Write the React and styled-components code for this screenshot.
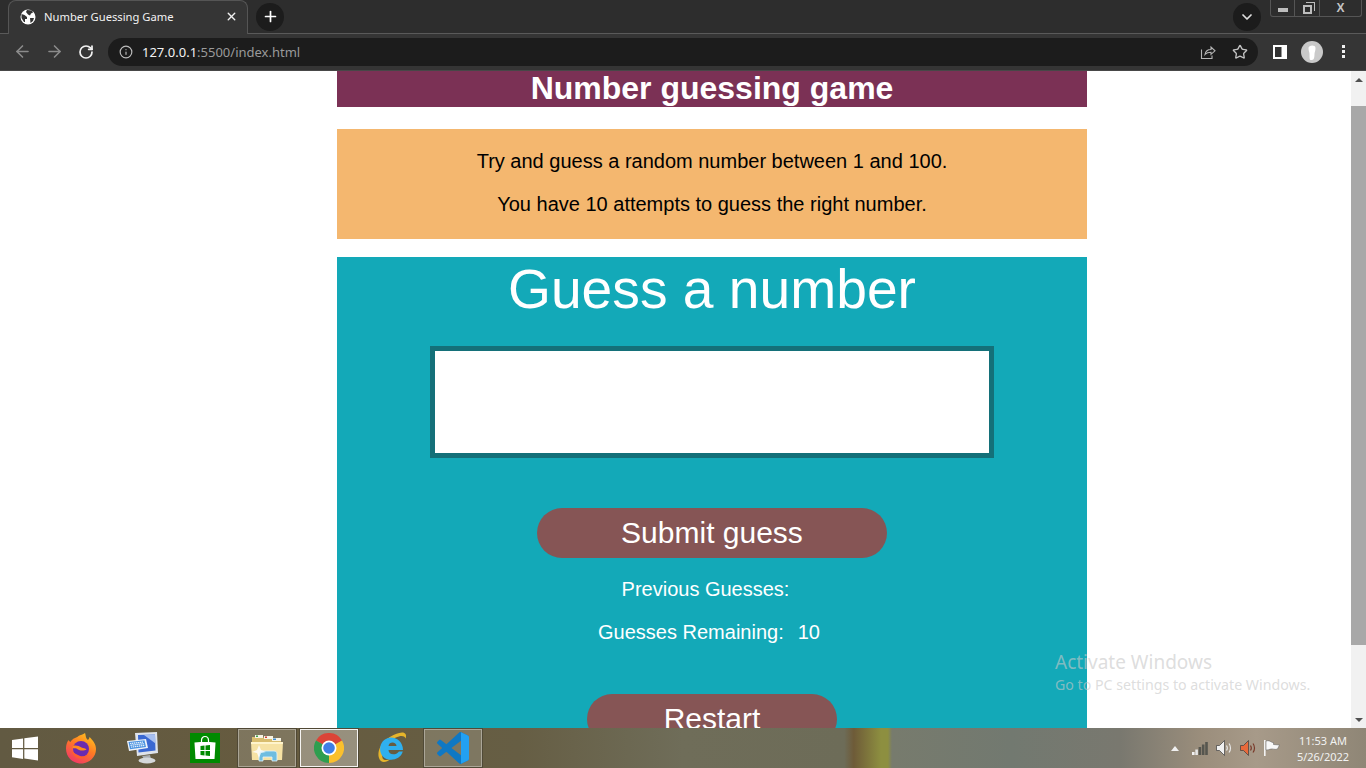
import React from "react";
import styled, { createGlobalStyle } from "styled-components";
import { ArrowLeft, ArrowRight, RotateCw, Info, Star, Plus, X, ChevronDown } from "lucide-react";

const GlobalStyle = createGlobalStyle`
  html, body {
    margin: 0;
    padding: 0;
    overflow: hidden;
  }
  * {
    box-sizing: border-box;
  }
`;

function GlobeIcon() {
  return (
    <svg width="16" height="16" viewBox="0 0 16 16">
      <circle cx="8" cy="8" r="7.500" fill="#fff" />
      <path d="M1.500 5l3 1 2.500 2 0 2 -2 0 0 3 -1 0 -2.500 -4z M7 1l5 .5 1 2 -2 1 -1 2 -2 -1 -2 -2.500z M10 9l4 0 -1 3 -2.500 2z" fill="#333" />
    </svg>
  );
}

function ShareIcon() {
  return (
    <svg width="16" height="16" viewBox="0 0 16 16" fill="none" stroke="#b5b5b5" strokeWidth="1.100">
      <path d="M1.500 5.500v9h10.500v-3" />
      <path d="M5 10.500c.5-3 2.500-5 6-5V3l4 3.800-4 3.500V8.200c-2.500 0-4.500.6-6 2.300z" />
    </svg>
  );
}

function SidePanelIcon() {
  return (
    <svg width="14" height="14" viewBox="0 0 14 14">
      <rect width="14" height="14" fill="#fff" />
      <rect x="2" y="2" width="6.500" height="10" fill="#333" />
    </svg>
  );
}

function Avatar() {
  return (
    <svg width="22" height="22" viewBox="0 0 22 22">
      <circle cx="11" cy="11" r="11" fill="#c9c9c9" />
      <path d="M7.500 7c0-3 7-3.500 7 0 0 3-1 4-1 6 0 3-.5 6-2.500 6h-1.500c-1 0-1-3-1-6 0-2-1-3-1-6z" fill="#fff" />
    </svg>
  );
}

function WindowsLogo() {
  return (
    <svg width="26" height="25" viewBox="0 0 27 25" fill="#fff">
      <path d="M0 3.600L11.500 2v10H0z" />
      <path d="M12.800 1.800L27 0v12H12.800z" />
      <path d="M0 13.300h11.500v10L0 21.700z" />
      <path d="M12.800 13.300H27V25l-14.200-2z" />
    </svg>
  );
}

function FirefoxIcon() {
  return (
    <svg width="32" height="32" viewBox="0 0 32 32">
      <defs>
        <linearGradient id="ffOuter" x1="0.800" y1="0" x2="0.200" y2="1">
          <stop offset="0" stopColor="#ffc61f" />
          <stop offset="0.450" stopColor="#ff7a24" />
          <stop offset="1" stopColor="#f0326c" />
        </linearGradient>
      </defs>
      <path d="M20 1c1 3 .5 5 3 7 1-1 1.500-2 1.500-3 3.500 3.500 6.500 7 6.500 12 0 8-6.500 14.500-15 14.500S1 25 1 16.500c0-3.500 1-6.500 2.500-8.500.5 1 1 1.500 2 2 2-4 6-4 8-6 2-1 4.500-1.500 6.500-3z" fill="url(#ffOuter)" />
      <circle cx="16" cy="17" r="8" fill="#6a2bb0" />
      <path d="M8 14c3-1 6 0 8.500 1.500 2 1 4 .5 5 2-3 2-8 1-10-1-1.500-.5-3 0-4-.5z" fill="#ff8a1e" />
      <path d="M7 19c1 5 5 8 10 7.500 3-.5 5-2 6-4-3 2-7 2.500-10 .5-2-1-4-2-6-4z" fill="#ff5e2e" />
    </svg>
  );
}

function ComputerIcon() {
  return (
    <svg width="32" height="32" viewBox="0 0 32 32">
      <path d="M8 1l22 -1 1 21 -21 3z" fill="#dfe3ea" />
      <path d="M11 3l17 -.5 .5 16 -17 2z" fill="#3a68d2" />
      <path d="M17 3l11 -.5 .5 9z" fill="#a7bff0" />
      <path d="M0 9l19 -2 2 9 -19 3z" fill="#eef3fa" />
      <path d="M1.500 10l16 -1.700 1.500 6.700 -16 2.200z" fill="#4a92e0" />
      <path d="M3 11.500l13 -1.400M3.500 13.300l13.500 -1.700M4 15.200l13.500 -1.800" stroke="#e4effb" strokeWidth="1.200" strokeDasharray="1.400 .6" />
      <path d="M15 24l8 -1 1 4h-7z" fill="#a9adb2" />
      <ellipse cx="20" cy="28.500" rx="8.500" ry="3" fill="#d5d8da" />
    </svg>
  );
}

function StoreIcon() {
  return (
    <svg width="30" height="30" viewBox="0 0 30 30">
      <rect width="30" height="30" fill="#008a00" />
      <path d="M11.500 10V7.500C11.500 5 13 3.500 15 3.500S18.500 5 18.500 7.500V10" fill="none" stroke="#fff" strokeWidth="1.200" />
      <path d="M4.500 9.500l6-.500h9l6 .500-1 16.500h-19z" fill="#fff" />
      <path d="M10.500 13l4-.500v4.500h-4zM15.500 12.400l4.500-.500V17h-4.500zM10.500 18h4v4.500l-4-.500zM15.500 18H20v5l-4.500-.500z" fill="#008a00" />
    </svg>
  );
}

function ExplorerIcon() {
  return (
    <svg width="32" height="32" viewBox="0 0 32 32">
      <path d="M1 5h11l2 2h16v7H1z" fill="#d9bd6e" />
      <rect x="4" y="3" width="8" height="3" fill="#f7f4e6" />
      <rect x="5" y="3.500" width="2" height="1.500" fill="#3fa04a" />
      <rect x="13" y="4" width="9" height="3" fill="#f7f4e6" />
      <rect x="14" y="4.500" width="2" height="1.500" fill="#d0423a" />
      <rect x="21" y="6" width="9" height="3" fill="#f7f4e6" />
      <rect x="22" y="6.500" width="3" height="1.500" fill="#3d8fd8" />
      <path d="M0 10h32l-1 18H1z" fill="#f6e2a4" />
      <path d="M0 10h32v2H0z" fill="#fff4cc" />
      <path d="M8 22c0-2 1-3 3-3h12c2 0 3 1 3 3v7h-5v-4H12v4H8z" fill="#6fbde0" stroke="#e5f4fb" strokeWidth="0.800" />
      <path d="M8 13l2 5 5 2-5 1-2 5-2-5-5-1 5-2z" fill="#fff" opacity="0.800" />
    </svg>
  );
}

function ChromeIcon() {
  return (
    <svg width="30" height="30" viewBox="0 0 30 30">
      <path d="M15 15L2 7.500A15 15 0 0 1 28 7.500z" fill="#db4437" />
      <path d="M15 15L28 7.500A15 15 0 0 1 15 30z" fill="#fbc02d" />
      <path d="M15 15L15 30A15 15 0 0 1 2 7.500z" fill="#2e9e4f" />
      <circle cx="15" cy="15" r="7.500" fill="#fff" />
      <circle cx="15" cy="15" r="5.800" fill="#3f7fe6" />
    </svg>
  );
}

function IEIcon() {
  return (
    <svg width="32" height="32" viewBox="0 0 32 32">
      <path d="M4 26C1 15 12 3 27 .5c3.500 0 5 2.500 3.500 6-1-2.500-3.500-3-6.500-2C14 7 6 17 7.500 26c1 2.500 4 2.500 8 1-4.500 4-10 4-11.500-1z" fill="#e7b52a" />
      <path d="M16 5.500c6.500 0 12 5 12 12.500H13.500c0 5 7 6 10.500 1.500h3.800c-2 6.500-8.500 9-14 8-6.500-1-9.500-7-8.500-12.500 1-6 6-9.500 10.700-9.500zm-2.500 8.500h8c0-4.500-7.500-5-8 0z" fill="#2fb0ee" fillRule="evenodd" />
    </svg>
  );
}

function VSCodeIcon() {
  return (
    <svg width="32" height="32" viewBox="0 0 100 100">
      <path
        d="M70.900 99.300c1.600.6 3.400.6 5-.2l20.600-9.900c2.200-1 3.500-3.200 3.500-5.600V16.400c0-2.400-1.400-4.600-3.500-5.600L75.900.9c-2.100-1-4.500-.8-6.300.6-.3.2-.5.4-.8.7L29.400 38.100 12.200 25c-1.600-1.200-3.800-1.100-5.300.2l-5.500 5c-1.800 1.700-1.800 4.500 0 6.200L16.300 50 1.400 63.600c-1.800 1.700-1.800 4.500 0 6.200l5.500 5c1.500 1.300 3.700 1.400 5.300.2l17.200-13.100 39.400 35.900c.6.600 1.300 1.100 2.100 1.500zM75 27.300L45.100 50 75 72.700V27.300z"
        fill="#0f78c4"
        fillRule="evenodd"
      />
      <path d="M75 1l21.500 9.800c2.200 1 3.500 3.200 3.500 5.600v67.200c0 2.400-1.300 4.600-3.500 5.600L75 99z" fill="#22a0f2" />
    </svg>
  );
}

function SignalIcon() {
  return (
    <svg width="16" height="13" viewBox="0 0 16 13">
      <rect x="0" y="10" width="2.600" height="3" fill="#f2f2f2" />
      <rect x="3.300" y="7.500" width="2.600" height="5.500" fill="#e6e6e6" />
      <rect x="6.600" y="5" width="2.600" height="8" fill="#56564f" />
      <rect x="9.900" y="2.500" width="2.600" height="10.500" fill="#56564f" />
      <rect x="13.200" y="0" width="2.600" height="13" fill="#56564f" />
    </svg>
  );
}

function SpeakerIcon({ body, wave }) {
  return (
    <svg width="16" height="16" viewBox="0 0 16 16">
      <path d="M.5 5.500h3l5-5v15l-5-5h-3z" fill={body} stroke="#3c3c3c" strokeWidth="0.700" />
      <path d="M10.500 5.500c1 1.500 1 3.500 0 5M13 3.500c2 2.500 2 6.500 0 9" fill="none" stroke={wave} strokeWidth="1.200" />
    </svg>
  );
}

function FlagIcon() {
  return (
    <svg width="16" height="16" viewBox="0 0 16 16">
      <rect x="0" y="0" width="1.600" height="16" fill="#f2f2f2" />
      <path d="M2 1c3-1 4 .5 6.500 1.500h1v2L15.500 5l-2 4c-3 1-4.500-.5-6.500 0-2 .5-3 1-5 1z" fill="#f8f8f8" stroke="#5a5a5a" strokeWidth="0.500" />
    </svg>
  );
}

export default function App() {
  return (
    <Screen>
      <GlobalStyle />
      <Browser>
        <TabStrip>
          <Tab>
            <GlobeIcon />
            <TabTitle>Number Guessing Game</TabTitle>
            <X size={13} strokeWidth={2.600} color="#f0f0f0" />
          </Tab>
          <RoundButton $left={8}>
            <Plus size={17} strokeWidth={2.400} color="#fff" />
          </RoundButton>
          <Spacer />
          <RoundButton>
            <ChevronDown size={16} strokeWidth={2.600} color="#e0e0e0" />
          </RoundButton>
          <WindowControls>
            <WindowButton $width={24}><MinimizeGlyph /></WindowButton>
            <WindowButton $width={25}><RestoreGlyph /></WindowButton>
            <WindowButton $width={41}><CloseGlyph>X</CloseGlyph></WindowButton>
          </WindowControls>
        </TabStrip>
        <Toolbar>
          <NavButton><ArrowLeft size={19} strokeWidth={2} color="#8b8b8b" /></NavButton>
          <NavButton><ArrowRight size={19} strokeWidth={2} color="#8b8b8b" /></NavButton>
          <NavButton><RotateCw size={16} strokeWidth={2.600} color="#f2f2f2" /></NavButton>
          <AddressBar>
            <Info size={14} strokeWidth={2} color="#bdbdbd" />
            <Url>
              <UrlHost>127.0.0.1</UrlHost>:5500/index.html
            </Url>
            <Spacer />
            <AddressAction><ShareIcon /></AddressAction>
            <AddressAction><Star size={16} strokeWidth={2} color="#c4c4c4" /></AddressAction>
          </AddressBar>
          <ToolbarEnd>
            <SidePanelIcon />
            <Avatar />
            <MenuDots><i /><i /><i /></MenuDots>
          </ToolbarEnd>
        </Toolbar>
      </Browser>

      <Viewport>
        <Page>
          <Banner>Number guessing game</Banner>
          <Intro>
            <IntroLine>Try and guess a random number between 1 and 100.</IntroLine>
            <IntroLine>You have 10 attempts to guess the right number.</IntroLine>
          </Intro>
          <GameCard>
            <GameTitle>Guess a number</GameTitle>
            <GuessInput type="text" />
            <PillButton $width={350}>Submit guess</PillButton>
            <Stat $shift={13}>Previous Guesses:</Stat>
            <Stat $shift={6}>
              Guesses Remaining:<StatValue>10</StatValue>
            </Stat>
            <PillButton $width={250} $top={50}>Restart</PillButton>
          </GameCard>
        </Page>
        <Scrollbar>
          <ScrollArrow $up />
          <ScrollTrack>
            <ScrollThumb />
          </ScrollTrack>
          <ScrollArrow />
        </Scrollbar>
        <Watermark>
          <WatermarkTitle>Activate Windows</WatermarkTitle>
          <WatermarkNote>Go to PC settings to activate Windows.</WatermarkNote>
        </Watermark>
      </Viewport>

      <Taskbar>
        <StartButton><WindowsLogo /></StartButton>
        <TaskList>
          <TaskButton><FirefoxIcon /></TaskButton>
          <TaskButton><ComputerIcon /></TaskButton>
          <TaskButton><StoreIcon /></TaskButton>
          <TaskButton $state="open"><ExplorerIcon /></TaskButton>
          <TaskButton $state="active"><ChromeIcon /></TaskButton>
          <TaskButton><IEIcon /></TaskButton>
          <TaskButton $state="open"><VSCodeIcon /></TaskButton>
        </TaskList>
        <Spacer />
        <Tray>
          <TrayArrow />
          <SignalIcon />
          <SpeakerIcon body="#f0f0f0" wave="#e8e8e8" />
          <SpeakerIcon body="#e8693a" wave="#7a3a2a" />
          <FlagIcon />
        </Tray>
        <Clock>
          <span>11:53 AM</span>
          <span>5/26/2022</span>
        </Clock>
      </Taskbar>
    </Screen>
  );
}

const Screen = styled.div`
  display: flex;
  flex-direction: column;
  width: 1366px;
  height: 768px;
  overflow: hidden;
  font-family: "Liberation Sans", Arial, sans-serif;
  background: #fff;
`;

const Browser = styled.div`
  flex: none;
  height: 71px;
  background: #2d2d2d;
  border-bottom: 1px solid #474747;
`;

const TabStrip = styled.div`
  display: flex;
  align-items: center;
  height: 34px;
  padding-left: 8px;
  border-bottom: 1px solid #5a5a5a;
`;

const Tab = styled.div`
  display: flex;
  align-items: center;
  gap: 8px;
  width: 240px;
  height: 34px;
  margin-bottom: -1px;
  padding: 0 9px 2px 11px;
  background: #353535;
  border: 1px solid #555;
  border-bottom: none;
  border-radius: 8px 8px 0 0;
`;

const TabTitle = styled.span`
  flex: 1;
  font: 11.2px "Noto Sans", sans-serif;
  color: #f2f2f2;
  white-space: nowrap;
`;

const RoundButton = styled.div`
  display: flex;
  align-items: center;
  justify-content: center;
  width: 28px;
  height: 28px;
  margin-left: ${(p) => p.$left || 0}px;
  border-radius: 50%;
  background: #1c1c1c;
`;

const Spacer = styled.div`
  flex: 1;
`;

const WindowControls = styled.div`
  display: flex;
  align-self: flex-start;
  height: 17px;
  margin: 0 4px 0 9px;
  border: 1px solid #555;
  border-top: none;
  border-radius: 0 0 3px 3px;
`;

const WindowButton = styled.div`
  display: flex;
  align-items: center;
  justify-content: center;
  width: ${(p) => p.$width}px;
  border-right: 1px solid #555;

  &:last-child {
    border-right: none;
  }
`;

const MinimizeGlyph = styled.div`
  width: 10px;
  height: 4px;
  margin-top: 3px;
  background: #bdbdbd;
`;

const RestoreGlyph = styled.div`
  position: relative;
  width: 9px;
  height: 9px;
  margin-top: 2px;
  border: 2px solid #bdbdbd;

  &::after {
    content: "";
    position: absolute;
    left: 1px;
    top: -5px;
    width: 8px;
    height: 8px;
    border: 1px solid #bdbdbd;
    border-left: none;
    border-bottom: none;
  }
`;

const CloseGlyph = styled.span`
  font: bold 12px "Liberation Sans", sans-serif;
  color: #c4c4c4;
`;

const Toolbar = styled.div`
  display: flex;
  align-items: center;
  height: 36px;
  padding: 0 0 1px 6px;
  background: #353535;
`;

const NavButton = styled.div`
  display: flex;
  align-items: center;
  justify-content: center;
  width: 32px;
  height: 32px;
`;

const AddressBar = styled.div`
  display: flex;
  align-items: center;
  width: 1150px;
  height: 28px;
  margin-left: 6px;
  padding: 0 2px 0 11px;
  border-radius: 14px;
  background: #1c1c1c;
`;

const Url = styled.span`
  margin-left: 9px;
  font: 13px "Noto Sans", sans-serif;
  color: #9a9a9a;
`;

const UrlHost = styled.span`
  color: #f2f2f2;
`;

const AddressAction = styled.div`
  display: flex;
  align-items: center;
  justify-content: center;
  width: 32px;
`;

const ToolbarEnd = styled.div`
  display: flex;
  align-items: center;
  gap: 14px;
  margin-left: 15px;
`;

const MenuDots = styled.div`
  display: flex;
  flex-direction: column;
  gap: 2px;
  margin-left: 5px;

  i {
    display: block;
    width: 3px;
    height: 3px;
    background: #f0f0f0;
  }
`;

const Viewport = styled.div`
  position: relative;
  flex: 1;
  display: flex;
  min-height: 0;
  overflow: hidden;
`;

const Page = styled.main`
  flex: 1;
  display: flex;
  flex-direction: column;
  padding-left: 337px;
`;

const Banner = styled.h1`
  flex: none;
  width: 750px;
  height: 36px;
  margin: 0 0 22px;
  font-size: 32px;
  line-height: 35px;
  font-weight: 700;
  text-align: center;
  color: #fff;
  background: #7b3155;
`;

const Intro = styled.section`
  flex: none;
  display: flex;
  flex-direction: column;
  gap: 20px;
  width: 750px;
  height: 110px;
  margin-bottom: 18px;
  padding-top: 21px;
  background: #f4b76f;
`;

const IntroLine = styled.p`
  margin: 0;
  font-size: 20px;
  line-height: 23px;
  text-align: center;
  color: #000;
`;

const GameCard = styled.section`
  flex: none;
  display: flex;
  flex-direction: column;
  align-items: center;
  width: 750px;
  padding-bottom: 40px;
  color: #fff;
  background: #13a9b8;
`;

const GameTitle = styled.h2`
  margin: 0 0 25px;
  font-size: 55.2px;
  line-height: 64px;
  font-weight: 400;
`;

const GuessInput = styled.input`
  width: 564px;
  height: 112px;
  margin-bottom: 50px;
  border: 5px solid #147079;
  background: #fff;
  outline: none;
`;

const PillButton = styled.button`
  flex: none;
  width: ${(p) => p.$width}px;
  height: 50px;
  margin-top: ${(p) => p.$top || 0}px;
  padding: 0;
  border: none;
  border-radius: 25px;
  font: 30px "Liberation Sans", sans-serif;
  color: #fff;
  background: #865555;
`;

const Stat = styled.p`
  margin: 20px 0 0;
  padding-right: ${(p) => p.$shift}px;
  font-size: 20px;
  line-height: 23px;
`;

const StatValue = styled.span`
  margin-left: 14px;
`;

const Scrollbar = styled.div`
  display: flex;
  flex-direction: column;
  flex: none;
  width: 15px;
  background: #f1f1f1;
`;

const ScrollArrow = styled.div`
  flex: none;
  display: flex;
  align-items: center;
  justify-content: center;
  height: 17px;

  &::before {
    content: "";
    border-left: 4px solid transparent;
    border-right: 4px solid transparent;
    ${(p) => (p.$up ? "border-bottom: 4px solid #505050;" : "border-top: 4px solid #505050;")}
  }
`;

const ScrollTrack = styled.div`
  flex: 1;
  padding-top: 18px;
`;

const ScrollThumb = styled.div`
  height: 539px;
  background: #a8a8a8;
`;

const Watermark = styled.div`
  position: absolute;
  left: 1055px;
  top: 579px;
  color: rgba(200, 200, 200, 0.62);
`;

const WatermarkTitle = styled.div`
  font: 19px "Noto Sans", sans-serif;
  line-height: 24px;
`;

const WatermarkNote = styled.div`
  margin-top: 1px;
  font: 14.2px "Noto Sans", sans-serif;
  line-height: 20px;
`;

const Taskbar = styled.footer`
  flex: none;
  display: flex;
  align-items: stretch;
  height: 40px;
  background: linear-gradient(
    90deg,
    #625a42 0%,
    #665b3f 20%,
    #665e44 38%,
    #6f6d59 50%,
    #6d6c58 61.800%,
    #6e5b38 62.500%,
    #8d8f40 64.500%,
    #8d8f40 65%,
    #777b6d 65.300%,
    #727970 74%,
    #79786f 82%,
    #9b8e7c 88%,
    #a79a89 92%,
    #8f8676 100%
  );
`;

const StartButton = styled.div`
  display: flex;
  align-items: center;
  justify-content: center;
  width: 50px;
`;

const TaskList = styled.div`
  display: flex;
  gap: 4px;
  margin-left: 2px;
  padding: 1px 0;
`;

const TaskButton = styled.div`
  display: flex;
  align-items: center;
  justify-content: center;
  width: 58px;
  border: 1px solid
    ${(p) =>
      p.$state === "active"
        ? "rgba(255, 255, 255, 0.9)"
        : p.$state === "open"
        ? "rgba(255, 255, 255, 0.35)"
        : "transparent"};
  background: ${(p) =>
    p.$state === "active"
      ? "rgba(255, 255, 255, 0.32)"
      : p.$state === "open"
      ? "rgba(255, 255, 255, 0.16)"
      : "transparent"};
  box-shadow: ${(p) => (p.$state ? "0 0 0 1px rgba(30, 30, 30, 0.3)" : "none")};
`;

const Tray = styled.div`
  display: flex;
  align-items: center;
  gap: 8px;
  margin-right: 15px;
`;

const TrayArrow = styled.div`
  width: 0;
  height: 0;
  margin-right: 5px;
  border-left: 4px solid transparent;
  border-right: 4px solid transparent;
  border-bottom: 5px solid #f0f0f0;
`;

const Clock = styled.div`
  display: flex;
  flex-direction: column;
  align-items: center;
  justify-content: center;
  gap: 1px;
  width: 71px;
  padding-right: 15px;
  font: 11px "Noto Sans", sans-serif;
  line-height: 15px;
  color: #f2f2f2;
  white-space: nowrap;
`;
